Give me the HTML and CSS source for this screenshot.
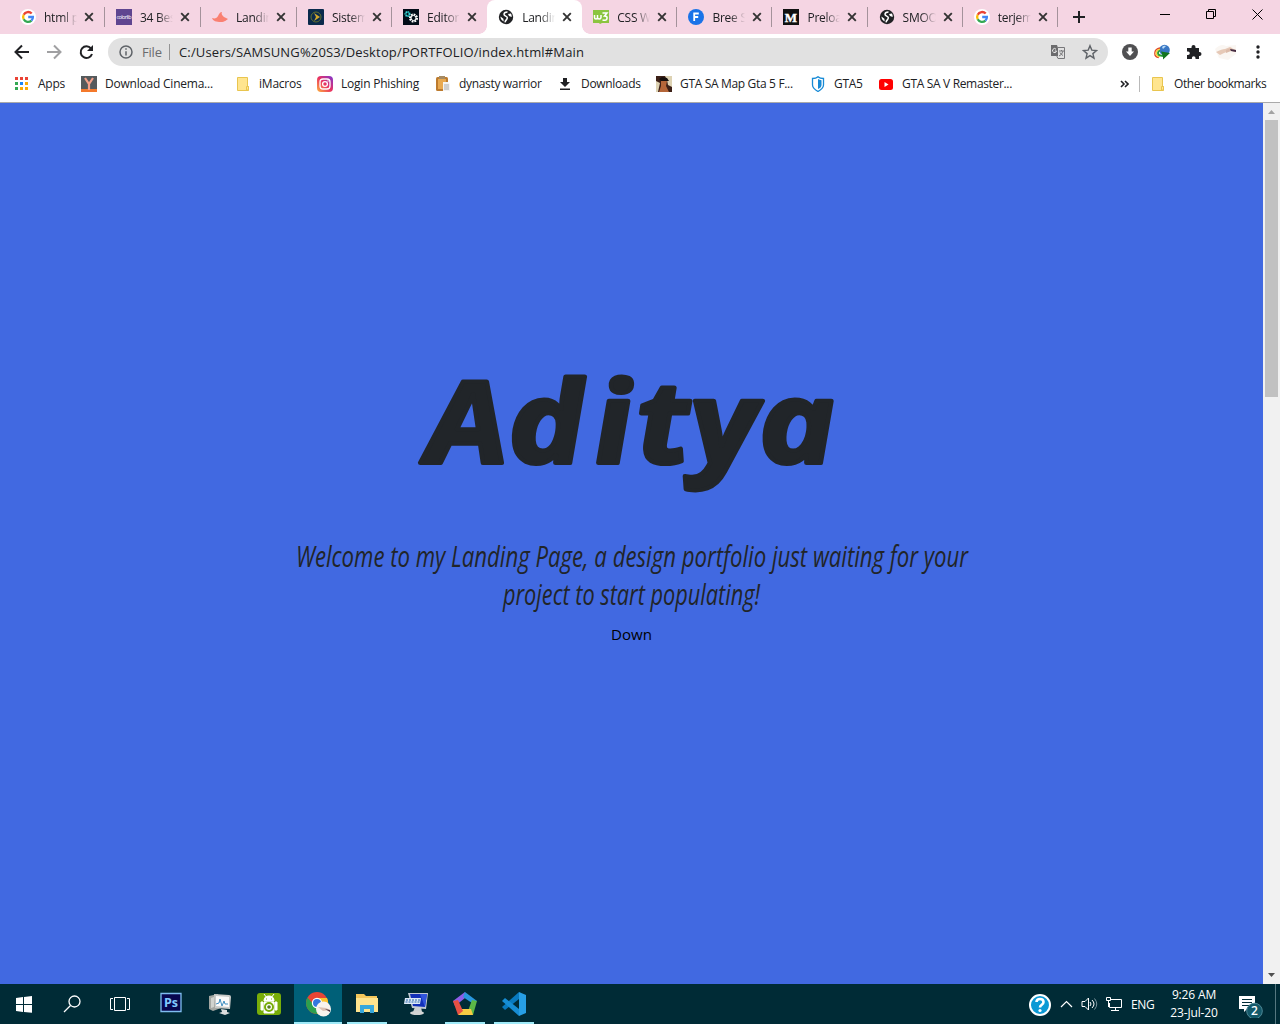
FILE: index.html
```html
<!DOCTYPE html>
<html lang="en">
<head>
<meta charset="utf-8">
<title>Landing Page</title>
<link rel="stylesheet" href="styles.css">
</head>
<body>
<svg class="defs" width="0" height="0">
  <symbol id="google" viewBox="0 0 16 16"><circle cx="8" cy="8" r="8" fill="#fff"/><g fill="none" stroke-width="2.3"><path d="M11.7 4.6A4.9 4.9 0 0 0 3.7 5.7" stroke="#ea4335"/><path d="M3.7 5.7a4.9 4.9 0 0 0 0 4.6" stroke="#fbbc05"/><path d="M3.7 10.3a4.9 4.9 0 0 0 7.7 1.3" stroke="#34a853"/><path d="M11.4 11.6A4.6 4.6 0 0 0 12.9 8H8.2" stroke="#4285f4"/></g></symbol>
  <symbol id="globe" viewBox="0 0 16 16"><circle cx="8" cy="8" r="7.2" fill="#202124"/><path d="M9.500 3Q6 3 6 5.300C6 7.500 9.300 6.800 9.300 8.800 9.300 10.800 7.500 10.800 7 13.300" fill="none" stroke="#fff" stroke-width="1.500"/><path d="M2.400 7.500l3 2.300.3 2.700A5.800 5.800 0 0 1 2.400 7.500zM10 5l3-.6q1 2 .6 3.600L11 7z" fill="#fff"/></symbol>
  <symbol id="x" viewBox="0 0 10 10"><path d="M1.200 1.200l7.600 7.600M8.800 1.200L1.200 8.800" stroke="#333" stroke-width="1.900"/></symbol>
  <symbol id="folder" viewBox="0 0 16 16"><path d="M2.500 1.500h10v9h1v4h-11z" fill="#ffe58f" stroke="#e9c54f"/><path d="M11.500 14v-3.500h2V14z" fill="#ffe58f" stroke="#e9c54f"/></symbol>
</svg>

<header class="tabs">
  <div class="tab"><svg class="fav"><use href="#google"/></svg><span>html p</span><svg class="close"><use href="#x"/></svg></div>
  <div class="tab"><svg class="fav" viewBox="0 0 16 16"><path fill="#5f4590" d="M0 0h16v16H0z"/><text x="8" y="10" font-size="5.500" fill="#fff" text-anchor="middle" textLength="15">colorlib</text></svg><span>34 Bes</span><svg class="close"><use href="#x"/></svg></div>
  <div class="tab"><svg class="fav" viewBox="0 0 16 16"><path d="M0 9c3 1 5 0 6-2 1-2 2-4 4-4-1 2 0 3 2 5l4 2c-2 1-3 3-7 3-5 0-8-1-9-4z" fill="#fa8072"/></svg><span>Landin</span><svg class="close"><use href="#x"/></svg></div>
  <div class="tab"><svg class="fav" viewBox="0 0 16 16"><rect width="16" height="16" rx="1" fill="#0a2a4c"/><circle cx="8" cy="8" r="5" fill="none" stroke="#64702f"/><path d="M6 4l6 4-6 4 2-4z" fill="#d1a72c"/></svg><span>Sistem</span><svg class="close"><use href="#x"/></svg></div>
  <div class="tab no-line"><svg class="fav" viewBox="0 0 16 16"><path fill="#020c18" d="M0 0h16v16H0z"/><circle cx="4.500" cy="5" r="2" fill="none" stroke="#35d9d9" stroke-width="2" stroke-dasharray="1.200 .5"/><circle cx="10.500" cy="9" r="3.500" fill="none" stroke="#fff" stroke-width="2" stroke-dasharray="1.800 .9"/><circle cx="10.500" cy="9" r="2.500" fill="none" stroke="#fff"/></svg><span>Editor</span><svg class="close"><use href="#x"/></svg></div>
  <div class="tab active no-line"><svg class="fav"><use href="#globe"/></svg><span>Landin</span><svg class="close"><use href="#x"/></svg></div>
  <div class="tab"><svg class="fav" viewBox="0 0 16 16"><path d="M0 1h16v13H9l-2 1-1-1H0z" fill="#8bc53f"/><path d="M1.500 6v2.500q0 1.500 1.500 1.500t1.500-1.500V6v2.500q0 1.500 1.700 1.500T8 8.500V6M9.500 4h4.500l-2.500 3q3 0 2.500 2.500t-4.500 1.500" fill="none" stroke="#fff" stroke-width="1.500"/></svg><span>CSS W3</span><svg class="close"><use href="#x"/></svg></div>
  <div class="tab"><svg class="fav" viewBox="0 0 16 16"><circle cx="8" cy="8" r="8" fill="#1a73e8"/><path d="M6.200 12V4.500h4.600M6.200 8h4" fill="none" stroke="#fff" stroke-width="1.800"/></svg><span>Bree S</span><svg class="close"><use href="#x"/></svg></div>
  <div class="tab"><svg class="fav" viewBox="0 0 16 16"><path fill="#111" d="M0 0h16v16H0z"/><text x="8" y="12.500" text-anchor="middle" font-family="Liberation Serif" font-weight="700" font-size="13" fill="#fff" stroke="#fff" stroke-width=".4">M</text></svg><span>Preloa</span><svg class="close"><use href="#x"/></svg></div>
  <div class="tab"><svg class="fav"><use href="#globe"/></svg><span>SMOO</span><svg class="close"><use href="#x"/></svg></div>
  <div class="tab"><svg class="fav"><use href="#google"/></svg><span>terjem</span><svg class="close"><use href="#x"/></svg></div>
  <svg class="plus" viewBox="0 0 12 12"><path d="M6 0v12M0 6h12" stroke="#202124" stroke-width="2"/></svg>
  <svg class="window" viewBox="0 0 104 12" fill="none" stroke="#000"><path d="M0 6.500h10M46.500 3.500h7v7h-7zM48.500 3V1.500h7v7H54M92.500 1.500l10 10M102.500 1.500l-10 10"/></svg>
</header>

<nav class="toolbar">
  <svg class="nav-icons" viewBox="0 0 84 16" fill="none" stroke-width="2"><path d="M15 8H2M8 1.500L1.500 8 8 14.500" stroke="#202124"/><path d="M33 8h13M40 1.500L46.500 8 40 14.500" stroke="#a0a0a2"/><path d="M77 4.500A5.800 5.800 0 1 0 78 10" stroke="#202124"/><path d="M79 1v6h-6z" fill="#202124"/></svg>
  <div class="omnibox">
    <svg width="14" height="14" viewBox="0 0 14 14" fill="none" stroke="#5f6368" stroke-width="1.500"><circle cx="7" cy="7" r="6"/><path d="M7 6.200v4.300M7 3.300v1.500"/></svg>
    <span class="file">File</span><i></i><span class="url">C:/Users/SAMSUNG%20S3/Desktop/PORTFOLIO/index.html#Main</span>
    <svg class="translate" viewBox="0 0 16 16"><path d="M1 1h6l1 3v8H1z" fill="#6b6b6d"/><path d="M8 3.500h6.500v11H8l-1.500-3" fill="none" stroke="#77777a"/><path d="M6 5.200A2 2 0 1 0 6.500 7H4.800" stroke="#eee" fill="none"/><path d="M9 7h5M11.500 6v1M13 7q-1 4-4 5M10 8.500q1 2 3 3" stroke="#77777a" fill="none"/></svg>
    <svg class="star" viewBox="0 0 16 16"><path d="M8 1.700l1.800 4.400 4.700.4-3.600 3.100 1.100 4.600L8 11.700l-4 2.500 1.100-4.600-3.600-3.100 4.700-.4z" fill="none" stroke="#5f6368" stroke-width="1.400"/></svg>
  </div>
  <div class="extensions">
    <svg viewBox="0 0 16 16"><circle cx="8" cy="8" r="8" fill="#505052"/><path d="M6.300 3.500h3.400v4H12L8 12 4 7.500h2.300z" fill="#fff"/></svg>
    <svg viewBox="0 0 16 16"><circle cx="10.500" cy="6" r="5.300" fill="#3977c4"/><path d="M8 3q2-2 4-1L9 5z" fill="#b9dbf6"/><path d="M6 4Q1 5 .8 9t4 4.500" stroke="#e14a26" stroke-width="1.300" fill="none"/><path d="M6 5.300Q2.500 6 2.200 9t3.500 3.500" stroke="#f8d232" stroke-width="1.300" fill="none"/><path d="M6 6.500Q3.700 7.500 4 9.500T9 12" stroke="#279c35" stroke-width="1.800" fill="none"/><path d="M7 7.500l9 1.500-7 6.500v-3z" fill="#14751e"/></svg>
    <svg viewBox="0 0 16 16"><path d="M1 4h4.500V3a2 2 0 0 1 4 0v1H13v4h.5a2 2 0 0 1 0 4H13v3H9.500v-1a1.800 1.800 0 0 0-3.600 0v1H1v-4h1a1.800 1.800 0 0 0 0-3.600H1z" fill="#202124"/></svg>
    <svg class="avatar" viewBox="0 0 22 16"><path d="M0 5Q6-1 11 2l10-1v9l-8 6-9-2z" fill="#faf6f2"/><path d="M1 8q6-3 9-3l5-2 2 1-3 3-5 2-4 2z" fill="#e6c9b7"/><path d="M11 6l5-2 5 2v2l-5-1-5 2z" fill="#dcbba9"/><path d="M15 5l6 1v2l-5-1z" fill="#432b42"/></svg>
    <svg class="dots" viewBox="0 0 4 16"><g fill="#202124"><circle cx="2" cy="3" r="1.700"/><circle cx="2" cy="8" r="1.700"/><circle cx="2" cy="13" r="1.700"/></g></svg>
  </div>
</nav>

<nav class="bookmarks">
  <a><svg viewBox="0 0 16 16"><path d="M1 1h3v3H1zM6 1h3v3H6zM11 1h3v3h-3z" fill="#ea4335"/><path d="M1 6h3v3H1zM1 11h3v3H1z" fill="#34a853"/><path d="M6 6h3v3H6z" fill="#1a85f8"/><path d="M11 6h3v3h-3zM6 11h3v3H6zM11 11h3v3h-3z" fill="#fbaa05"/></svg>Apps</a>
  <a><svg viewBox="0 0 16 16"><path fill="#555a5c" d="M0 0h16v16H0z"/><path fill="#f4792b" d="M0 13h16v3H0z"/><path d="M4 2l4 6 4-6M8 8v6" stroke="#f4a18b" stroke-width="2.200" fill="none"/></svg>Download Cinema...</a>
  <a><svg><use href="#folder"/></svg>iMacros</a>
  <a><svg viewBox="0 0 16 16"><defs><linearGradient id="insta" x1="0" y1="1" x2="1" y2="0"><stop stop-color="#feb53e"/><stop offset=".5" stop-color="#e93162"/><stop offset="1" stop-color="#7b36d4"/></linearGradient></defs><rect width="16" height="16" rx="4" fill="url(#insta)"/><rect x="3" y="3" width="10" height="10" rx="3" fill="none" stroke="#fff" stroke-width="1.300"/><circle cx="8" cy="8" r="2.400" fill="none" stroke="#fff" stroke-width="1.300"/><circle cx="11" cy="5" r=".7" fill="#fff"/></svg>Login Phishing</a>
  <a class="tight"><svg viewBox="0 0 16 16"><rect x="1" y="1" width="12" height="14" rx="1.500" fill="#bd7b2e"/><path d="M3 3h8v10H3z" fill="#e8a951"/><path d="M4 0h6v3H4z" fill="#a68b63"/><path d="M8 6h5l2 2v7H8z" fill="#f4f4f4"/><path d="M9 9h5M9 11h5M9 13h5" stroke="#aaa"/></svg>dynasty warrior</a>
  <a class="tight"><svg viewBox="0 0 16 16"><path d="M6 2h4v4h3L8 11 3 6h3zM3 12.500h10V14H3z" fill="#202124"/></svg>Downloads</a>
  <a class="tight"><svg viewBox="0 0 16 16"><path fill="#3c2017" d="M0 0h16v16H0z"/><path d="M9 0h7v11l-4-2-1-5zM0 5l4 2-2 9H0z" fill="#ddd2b3"/><path d="M5 5h6l-1 5 3 6H3l2-6z" fill="#b56639"/><path d="M3 3l3-2 5 1 2 3H5z" fill="#170f0d"/></svg>GTA SA Map Gta 5 F...</a>
  <a class="tight"><svg viewBox="0 0 16 16"><path d="M2.500 2.500Q6 2.500 8 .7q2 1.800 5.500 1.800V9c0 3-3 5-5.500 6.500C5.500 14 2.500 12 2.500 9z" fill="#fff" stroke="#178ad6" stroke-width="1.300"/><path d="M8 3q1.500 1 3.500 1.200V9c0 2-1.500 3-3.500 4z" fill="#178ad6"/></svg>GTA5</a>
  <a class="tight"><svg viewBox="0 0 16 16"><rect x="1" y="3" width="14" height="11" rx="2.500" fill="#f00"/><path d="M6.500 6l4 2.500-4 2.500z" fill="#fff"/></svg>GTA SA V Remaster...</a>
  <span class="more"><svg viewBox="0 0 9 8"><path d="M1 1l3 3-3 3M5 1l3 3-3 3" fill="none" stroke="#202124" stroke-width="1.600"/></svg></span>
  <a class="other"><svg><use href="#folder"/></svg>Other bookmarks</a>
</nav>

<main class="viewport">
  <section class="hero">
    <svg class="hero-text" viewBox="0 0 700 300">
      <text class="name" transform="translate(0 111.500) skewX(4) scale(1.14 1)" x="128 200 275.500 313 360.500 420" y="0">Aditya</text>
      <text class="lead" x="14" y="215.500" textLength="672" lengthAdjust="spacingAndGlyphs">Welcome to my Landing Page, a design portfolio just waiting for your</text>
      <text class="lead" x="221" y="253.500" textLength="257" lengthAdjust="spacingAndGlyphs">project to start populating!</text>
      <text class="down" x="329" y="289" textLength="41" lengthAdjust="spacingAndGlyphs">Down</text>
    </svg>
  </section>
  <aside class="scrollbar">
    <svg viewBox="0 0 17 17"><path d="M5 11h7L8.500 7z" fill="#a3a3a3"/></svg>
    <div></div>
    <svg class="bottom" viewBox="0 0 17 17"><path d="M5 6h7l-3.500 4z" fill="#505050"/></svg>
  </aside>
</main>

<footer class="taskbar">
  <div class="system">
    <svg viewBox="0 0 48 40"><path d="M16 14l7-1v7h-7zM24 13l8-1v8h-8zM16 21h7v7l-7-1zM24 21h8v7.800L24 28z" fill="#fff"/></svg>
    <svg viewBox="0 0 48 40" fill="none" stroke="#fff" stroke-width="1.300"><circle cx="26.500" cy="17.500" r="5.500"/><path d="M22.500 21.500L16 28"/></svg>
    <svg viewBox="0 0 48 40" fill="none" stroke="#fff"><path d="M18.500 13.500h11v13h-11zM17 14.500h-2.500v11H17M31 14.500h2.500v11H31"/></svg>
  </div>
  <div class="apps">
    <span><svg viewBox="0 0 24 24"><path d="M2 1.500h20v18H2z" fill="#08064f" stroke="#7fbdf0" stroke-width="1.300"/><text x="12" y="15" font-size="12.500" font-weight="700" text-anchor="middle" fill="#80c9ff">Ps</text></svg></span>
    <span><svg viewBox="0 0 24 24"><path d="M1 4l9-2 3 14-8 3-4-2z" fill="#a4a7a2"/><path d="M3 6l3-1v10l-3 1z" fill="#d1d3ce"/><path d="M6 2l15 1q2 0 2 2l-1 12-15-1z" fill="#c9cbc9"/><path d="M8 4l13 1v10L8 14z" fill="#fafafa"/><path d="M8 12l3-1 1-4 2 7 2-5 1 3h3" stroke="#3f8ec0" fill="none"/><path d="M13 17l6 1v2l3 1-5 2-6-2 3-1z" fill="#ddd"/></svg></span>
    <span><svg viewBox="0 0 24 24"><rect y="1" width="24" height="22" rx="3" fill="#78ad08"/><path d="M4 10h2v8H4zM18 10h2v8h-2zM7 10h10v11H7zM7 9q0-5 5-5t5 5zM7 2l3 4M17 2l-3 4" fill="#fff" stroke="#fff"/><circle cx="12" cy="15" r="4" fill="#fff" stroke="#78ad08" stroke-width="2"/><circle cx="12" cy="15" r="1.800" fill="#587d20"/><path d="M9 7h1M14 7h1" stroke="#78ad08"/></svg></span>
    <span class="running current"><svg viewBox="0 0 26 26"><circle cx="12" cy="12" r="11" fill="#e84535"/><path d="M2.500 6.500A11 11 0 0 0 12 23l5-8-8-1z" fill="#2ca04e"/><path d="M12 7h10a11 11 0 0 1-10 16l5-9z" fill="#fbc32e"/><circle cx="12" cy="12" r="5.200" fill="#fff"/><circle cx="12" cy="12" r="4" fill="#3377df"/><circle cx="18.500" cy="18" r="7.500" fill="#f8f2ed"/><path d="M13 16l8 1 4 2-7 1z" fill="#dbc1b3"/><path d="M20 18l5 1v2z" fill="#503545"/></svg></span>
    <span class="running"><svg viewBox="0 0 24 24"><path d="M1 2h8l2 2h11v16H1z" fill="#f4c65b"/><path d="M1 6h22v14H1z" fill="#ffe38d"/><path d="M5 21v-8h14v8h-4v-4H9v4z" fill="#37a7dc"/></svg></span>
    <span><svg viewBox="0 0 24 24"><path d="M4 1h20l-2 16-14-1z" fill="#c1c9d1"/><path d="M6 2h17l-2 13-12-1z" fill="#1230b8"/><path d="M16 2h7l-2 13z" fill="#3155dc"/><path d="M1 6h16l-1 6H0z" fill="#dce9f7"/><path d="M2 8h14M1.500 10h14" stroke="#2563a6" stroke-dasharray="2 1"/><path d="M11 15h6l1 5H9z" fill="#cbd0d2"/><ellipse cx="13" cy="21" rx="7" ry="2" fill="#d3d4d4"/></svg></span>
    <span class="running"><svg viewBox="0 0 24 24"><path d="M12 0L0 9l2 5 10-8z" fill="#8e5de8"/><path d="M12 0l12 9-5 2-9-6z" fill="#2997de"/><path d="M24 9l-4 14-5-4 4-11z" fill="#5bb746"/><path d="M20 23H5l3-6h10z" fill="#f6cb43"/><path d="M5 23L0 9l5-1 5 11z" fill="#e75043"/></svg></span>
    <span class="running"><svg viewBox="0 0 24 24"><path d="M17 0l7 3v18l-7 3z" fill="#279fe5"/><path d="M17 0v7L3 18l-3-3z" fill="#0879be"/><path d="M0 9l3-3 14 11v7z" fill="#168dd4"/></svg></span>
  </div>
  <div class="tray">
    <svg width="24" height="24" viewBox="0 0 24 24"><circle cx="12" cy="13" r="10" fill="#0b99d5" stroke="#fff" stroke-width="2"/><path d="M8.500 10q0-3 3.500-3t3.500 3q0 2-2 3-1.500 1-1.500 2.500" fill="none" stroke="#fff" stroke-width="2.600"/><circle cx="12" cy="18.500" r="1.600" fill="#fff"/></svg>
    <svg width="13" height="12" viewBox="0 0 13 12"><path d="M1 9l5.500-5.500L12 9" fill="none" stroke="#fff" stroke-width="1.200"/></svg>
    <svg width="17" height="16" viewBox="0 0 17 16" fill="none" stroke="#fff"><path d="M1 5.500h3L7.500 2v12L4 10.500H1zM9 6q2 2 0 4M11 4q4 4 0 8"/><path d="M13.500 2.500q4.500 5.500 0 11" stroke="#7e979f"/></svg>
    <svg width="16" height="16" viewBox="0 0 16 16" fill="none" stroke="#fff"><path d="M5 3.500h10.500v8H3.500V7M9.500 11v3M5 14.500h8M.5 1.500h4v3h-4zM2.500 5v6"/></svg>
    <span class="lang">ENG</span>
    <div class="clock"><span>9:26 AM</span><span>23-Jul-20</span></div>
    <svg class="notice" width="26" height="28" viewBox="0 0 26 28"><path d="M1 6h16v13h-8l-3 3v-3H1z" fill="#fff"/><path d="M4 9.500h10M4 12.500h10M4 15.500h7" stroke="#002b36"/><circle cx="16.500" cy="21" r="7.800" fill="#14596a" stroke="#4d8795"/><text x="16.500" y="25.300" font-size="12" font-weight="600" text-anchor="middle" fill="#fff">2</text></svg>
  </div>
</footer>
</body>
</html>
```
FILE: styles.css
```css
* { box-sizing: border-box; }
body { margin: 0; width: 1280px; height: 1024px; overflow: hidden; display: flex; flex-direction: column; background: #fff; color: #202124; font: 12px "Open Sans", "Noto Sans", sans-serif; }
svg { display: block; flex: none; }
.defs { position: absolute; }

.tabs { height: 34px; padding-left: 9px; display: flex; background: #f5d5e3; }
.tab { width: 95.1px; height: 34px; flex: none; display: flex; align-items: center; padding-left: 11px; position: relative; }
.tab:nth-child(-n+3) { width: 96px; }
.tab::after { content: ""; position: absolute; right: 0; top: 7px; width: 1px; height: 20px; background: #a4929b; }
.no-line::after { display: none; }
.tab span { width: 33px; flex: none; margin: 0 7px 0 8px; overflow: hidden; white-space: nowrap; mask-image: linear-gradient(90deg, #000 55%, transparent); letter-spacing: -.25px; }
.fav { width: 16px; height: 16px; }
.close { width: 10px; height: 10px; }
.active { background: #fff; border-radius: 8px 8px 0 0; }
.active::before { content: ""; position: absolute; left: -8px; right: -8px; bottom: 0; height: 8px; background: radial-gradient(circle at 0 0, transparent 7.500px, #fff 8px) left / 8px 8px no-repeat, radial-gradient(circle at 100% 0, transparent 7.500px, #fff 8px) right / 8px 8px no-repeat; }
.plus { width: 12px; height: 12px; margin: 11px 0 0 15px; }
.window { width: 104px; height: 12px; margin: 8px 16px 0 auto; }

.toolbar { height: 36px; display: flex; align-items: center; padding-left: 14px; }
.nav-icons { width: 84px; height: 16px; margin-right: 10px; }
.omnibox { width: 1000px; height: 28px; border-radius: 14px; background: #e1e1e1; display: flex; align-items: center; padding: 0 10px 0 11px; font-size: 13px; }
.file { width: 19px; margin: 0 8px 0 9px; color: #6a6a6d; letter-spacing: -.2px; }
.omnibox i { width: 1px; height: 16px; background: #949494; margin-right: 9px; }
.url { width: 405px; white-space: nowrap; letter-spacing: .15px; }
.translate { width: 16px; height: 16px; margin-left: auto; }
.star { width: 16px; height: 16px; margin-left: 16px; }
.extensions { display: flex; align-items: center; gap: 16px; margin-left: 14px; }
.extensions svg { width: 16px; height: 16px; }
.extensions .avatar { width: 22px; margin-left: -3px; }
.extensions .dots { width: 4px; margin-left: 3px; }

.bookmarks { height: 33px; border-bottom: 1px solid #aaa; padding: 0 14px 5px; display: grid; grid-template-columns: 67px 154px 82px 118px 122px 99px 154px 68px 1fr 20px 127px; align-items: center; }
.bookmarks a { display: flex; align-items: center; gap: 8px; white-space: nowrap; letter-spacing: -.22px; }
.bookmarks a svg { width: 16px; height: 16px; }
.bookmarks .tight { letter-spacing: -.33px; }
.more svg { width: 9px; height: 8px; margin-left: 1px; }
.bookmarks .other { height: 16px; border-left: 1px solid #b9b9b9; padding-left: 10px; letter-spacing: -.42px; }

.viewport { flex: 1; display: flex; background: #4169e1; }
.hero { flex: 1; display: flex; align-items: center; justify-content: center; }
.hero-text { width: 700px; height: 300px; overflow: visible; margin-top: -86px; }
.name { font: italic 700 114px "Open Sans", sans-serif; fill: #212529; stroke: #212529; stroke-width: 4px; stroke-linejoin: round; }
.lead { font: italic 400 28.5px "Open Sans", sans-serif; fill: #212529; }
.down { font: 400 14px "Open Sans", sans-serif; fill: #000; }
.scrollbar { width: 17px; background: #f1f1f1; display: flex; flex-direction: column; align-items: center; }
.scrollbar svg { width: 17px; height: 17px; }
.scrollbar div { width: 13px; height: 277px; background: #c1c1c1; }
.scrollbar .bottom { margin-top: auto; }

.taskbar { height: 40px; background: #002b36; display: flex; color: #fff; }
.system { display: flex; margin-right: 3px; }
.system svg { width: 48px; height: 40px; }
.apps { display: flex; gap: 1px; }
.apps span { width: 48px; height: 40px; display: flex; align-items: center; justify-content: center; position: relative; }
.apps svg { width: 24px; height: 24px; }
.apps .current { background: #006078; }
.apps .current svg { width: 26px; height: 26px; }
.running::after { content: ""; position: absolute; left: 4px; right: 4px; bottom: 0; height: 2px; background: #9feaf8; }
.current::after { left: 0; right: 0; }
.tray { margin-left: auto; display: flex; align-items: center; padding-right: 4px; }
.tray svg + svg { margin-left: 8px; }
.lang { margin-left: 9px; width: 25px; letter-spacing: -.3px; }
.clock { width: 76px; display: flex; flex-direction: column; align-items: center; line-height: 18px; letter-spacing: -.15px; }
.notice { margin: 0 11px 0 6px; }
.tray::after { content: ""; width: 1px; height: 40px; background: #557780; }
```
